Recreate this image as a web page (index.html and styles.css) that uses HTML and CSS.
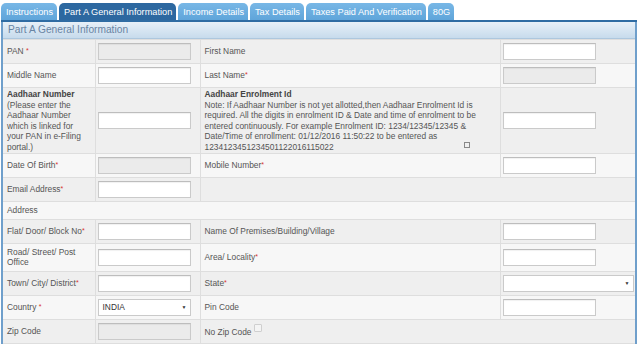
FILE: index.html
```html
<!DOCTYPE html>
<html lang="en">
<head>
    <meta charset="UTF-8">
    <title>Part A General Information</title>
    <link rel="stylesheet" href="styles.css">
</head>
<body>
<ul class="tabs">
    <li>Instructions</li>
    <li class="active">Part A General Information</li>
    <li>Income Details</li>
    <li>Tax Details</li>
    <li>Taxes Paid And Verification</li>
    <li>80G</li>
</ul>
<div class="panel">
    <div class="panel-title">Part A General Information</div>
    <table class="form-table">
        <colgroup>
            <col class="c1"><col class="c2"><col class="c3"><col class="c4">
        </colgroup>
        <tr class="dark">
            <td>PAN <span class="req">*</span></td>
            <td><input type="text" class="field" disabled></td>
            <td>First Name</td>
            <td><input type="text" class="field"></td>
        </tr>
        <tr class="light">
            <td>Middle Name</td>
            <td><input type="text" class="field"></td>
            <td>Last Name<span class="req">*</span></td>
            <td><input type="text" class="field" disabled></td>
        </tr>
        <tr class="dark aadhaar">
            <td><b>Aadhaar Number</b><br>(Please enter the Aadhaar Number which is linked for your PAN in e-Filing portal.)</td>
            <td><input type="text" class="field"></td>
            <td><b>Aadhaar Enrolment Id</b><br>Note: If Aadhaar Number is not yet allotted,then Aadhaar Enrolment Id is required. All the digits in enrolment ID &amp; Date and time of enrolment to be entered continuously. For example Enrolment ID: 1234/12345/12345 &amp; Date/Time of enrollment: 01/12/2016 11:50:22 to be entered as 1234123451234501122016115022<span class="mini-box"></span></td>
            <td><input type="text" class="field"></td>
        </tr>
        <tr class="light">
            <td>Date Of Birth<span class="req">*</span></td>
            <td><input type="text" class="field" disabled></td>
            <td>Mobile Number<span class="req">*</span></td>
            <td><input type="text" class="field"></td>
        </tr>
        <tr class="dark">
            <td>Email Address<span class="req">*</span></td>
            <td><input type="text" class="field"></td>
            <td colspan="2"></td>
        </tr>
        <tr class="light short">
            <td colspan="4">Address</td>
        </tr>
        <tr class="dark">
            <td>Flat/ Door/ Block No<span class="req">*</span></td>
            <td><input type="text" class="field"></td>
            <td>Name Of Premises/Building/Village</td>
            <td><input type="text" class="field"></td>
        </tr>
        <tr class="light">
            <td>Road/ Street/ Post Office</td>
            <td><input type="text" class="field"></td>
            <td>Area/ Locality<span class="req">*</span></td>
            <td><input type="text" class="field"></td>
        </tr>
        <tr class="dark">
            <td>Town/ City/ District<span class="req">*</span></td>
            <td><input type="text" class="field"></td>
            <td>State<span class="req">*</span></td>
            <td><div class="select wide"><span></span><span class="arrow">&#9660;</span></div></td>
        </tr>
        <tr class="light">
            <td>Country <span class="req">*</span></td>
            <td><div class="select"><span>INDIA</span><span class="arrow">&#9660;</span></div></td>
            <td>Pin Code</td>
            <td><input type="text" class="field"></td>
        </tr>
        <tr class="dark">
            <td>Zip Code</td>
            <td><input type="text" class="field" disabled></td>
            <td colspan="2">No Zip Code <span class="check"></span></td>
        </tr>
    </table>
</div>
</body>
</html>
```

FILE: styles.css
```css
body {
    margin: 0;
    padding: 3px 3px 0 1px;
    background-color: white;
    font-family: 'Liberation Sans', Arial, sans-serif;
    color: #555;
}
.tabs {
    list-style: none;
    margin: 0;
    padding: 0;
    display: flex;
    gap: 2px;
    border-bottom: 2px solid #2f6ca3;
}
.tabs li {
    height: 17px;
    line-height: 18px;
    padding: 0 4px 0 5px;
    font-size: 9.2px;
    color: white;
    background: linear-gradient(#78b7e6, #5fa5da);
    border-radius: 5px 5px 0 0;
}
.tabs li.active {
    background: #2d68a0;
}
.panel {
    border-left: 2px solid #6f9fcb;
    border-right: 2px solid #6f9fcb;
}
.panel-title {
    height: 16px;
    line-height: 16px;
    padding-left: 5px;
    font-size: 10.2px;
    color: #6884a3;
    background: linear-gradient(#e7f0f8, #c7dbec);
    border-bottom: 1px solid #adc7de;
}
.form-table {
    width: 100%;
    table-layout: fixed;
    border-collapse: collapse;
    font-size: 8.4px;
    line-height: 10.5px;
}
.c1 { width: 92px; }
.c2 { width: 105px; }
.c3 { width: 300px; }
.form-table td {
    padding: 3px 4px;
    border: 1px solid #dedede;
    vertical-align: middle;
}
.form-table tr td:first-child { border-left: none; }
.form-table tr td:last-child { border-right: none; }
.form-table td:nth-child(2) { padding-left: 2px; }
.form-table td:nth-child(4) { padding-left: 2px; }
.dark { background-color: #efefef; }
.light { background-color: #f7f7f7; }
.aadhaar td { padding-top: 1px; padding-bottom: 1px; }
.aadhaar b { color: #444; }
.short td { padding-top: 3px; padding-bottom: 3px; }
.req {
    color: #d9302c;
    font-size: 7px;
    vertical-align: 1px;
}
.field {
    display: block;
    box-sizing: border-box;
    width: 93px;
    height: 17px;
    margin: 0;
    padding: 0 4px;
    border: 1px solid #cacaca;
    border-top-color: #bdbdbd;
    background: white;
    box-shadow: inset 0 1px 1px rgba(0,0,0,0.06);
    font-family: inherit;
    font-size: 8.4px;
}
.field:disabled {
    background: #ebebeb;
}
.select {
    display: flex;
    justify-content: space-between;
    align-items: center;
    box-sizing: border-box;
    width: 93px;
    height: 17px;
    padding: 0 3px 0 4px;
    border: 1px solid #cacaca;
    background: white;
    color: #333;
    font-size: 8.4px;
}
.select.wide {
    width: 131px;
}
.select .arrow {
    font-size: 5px;
    color: #333;
}
.mini-box {
    display: inline-block;
    width: 4px;
    height: 4px;
    margin-left: 130px;
    border: 1px solid #888;
    vertical-align: 2px;
}
.check {
    display: inline-block;
    width: 6px;
    height: 6px;
    border: 1px solid #cfcfcf;
    border-radius: 1px;
    background: #f4f4f4;
    vertical-align: 3px;
}
```
